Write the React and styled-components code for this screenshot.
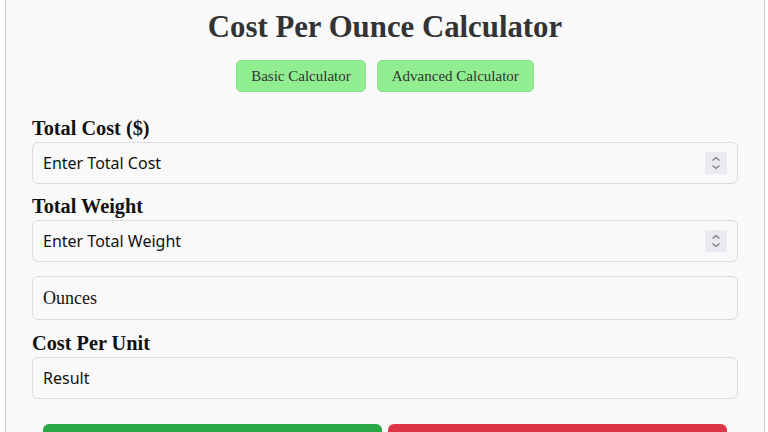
import React from 'react';
import styled, { createGlobalStyle } from 'styled-components';

const GlobalStyle = createGlobalStyle`
  html, body {
    margin: 0;
    padding: 0;
    background: #ffffff;
    font-family: "Liberation Serif", "Times New Roman", serif;
  }
`;

const Page = styled.div`
  padding: 0 3px 0 5px;
  height: 432px;
  overflow: hidden;
`;

const Card = styled.div`
  background-color: #f9f9f9;
  border: 1px solid #cccccc;
  border-top: none;
  padding: 6px 26px 20px 26px;
  min-height: 500px;
`;

const Title = styled.h1`
  margin: 0;
  text-align: center;
  color: #333333;
  font-size: 30.8px;
  line-height: 42px;
  font-weight: bold;
`;

const Tabs = styled.div`
  display: flex;
  justify-content: center;
  gap: 11px;
  margin-top: 12px;
  margin-bottom: 25px;
`;

const TabButton = styled.button`
  height: 32px;
  padding: 0 14px;
  background-color: #90ee90;
  color: #333333;
  border: 1px solid #8ee08e;
  border-radius: 5px;
  font-family: "Liberation Serif", "Times New Roman", serif;
  font-size: 15px;
`;

const Label = styled.label`
  display: block;
  font-size: 20.3px;
  line-height: 23px;
  font-weight: bold;
  color: #111111;
  margin-bottom: 2px;
`;

const Field = styled.div`
  position: relative;
  margin-top: ${(p) => p.$above || 0}px;
  margin-bottom: ${(p) => p.$below || 11}px;
`;

const Input = styled.input`
  box-sizing: border-box;
  display: block;
  width: 100%;
  height: 42px;
  padding: 0 10px;
  border: 1.5px solid #dcdcdc;
  border-radius: 6px;
  background: #f9f9f9;
  color: #111111;
  font-family: "Noto Sans", "Open Sans", sans-serif;
  font-size: 16px;
  outline: none;
  &::placeholder { color: #111111; }
`;

const Select = styled.select`
  box-sizing: border-box;
  display: block;
  width: 100%;
  height: 44px;
  padding: 0 10px;
  border: 1.5px solid #dcdcdc;
  border-radius: 6px;
  background: #f9f9f9;
  color: #111111;
  font-family: "Liberation Serif", "Times New Roman", serif;
  font-size: 18px;
  appearance: none;
  outline: none;
`;

const Spinner = styled.div`
  position: absolute;
  right: 11px;
  top: 10px;
  width: 22px;
  height: 22px;
  background: #e9e9ef;
  display: flex;
  align-items: center;
  justify-content: center;
`;

const Actions = styled.div`
  display: grid;
  grid-template-columns: 1fr 1fr;
  gap: 6px;
  padding: 0 11px;
  margin-top: 25px;
`;

const ActionButton = styled.button`
  height: 40px;
  border: none;
  border-radius: 6px;
  background-color: ${(p) => (p.$danger ? '#dc3545' : '#28a745')};
  color: #ffffff;
  font-family: "Liberation Serif", "Times New Roman", serif;
  font-size: 16px;
`;

const SpinIcon = () => (
  <svg width="12" height="16" viewBox="0 0 12 16">
    <path d="M2.5 5.5 L6 2.5 L9.5 5.5" fill="none" stroke="#7a7a80" strokeWidth="1.2" />
    <path d="M2.5 10.5 L6 13.5 L9.5 10.5" fill="none" stroke="#7a7a80" strokeWidth="1.2" />
  </svg>
);

const NumberField = ({ label, placeholder }) => (
  <>
    <Label>{label}</Label>
    <Field>
      <Input type="text" placeholder={placeholder} />
      <Spinner>
        <SpinIcon />
      </Spinner>
    </Field>
  </>
);

export default function App() {
  return (
    <Page>
      <GlobalStyle />
      <Card>
        <Title>Cost Per Ounce Calculator</Title>
        <Tabs>
          <TabButton>Basic Calculator</TabButton>
          <TabButton>Advanced Calculator</TabButton>
        </Tabs>
        <NumberField label="Total Cost ($)" placeholder="Enter Total Cost" />
        <NumberField label="Total Weight" placeholder="Enter Total Weight" />
        <Field $above={14} $below={12}>
          <Select defaultValue="oz">
            <option value="oz">Ounces</option>
            <option value="lb">Pounds</option>
            <option value="g">Grams</option>
          </Select>
        </Field>
        <Label>Cost Per Unit</Label>
        <Field>
          <Input type="text" placeholder="Result" readOnly />
        </Field>
        <Actions>
          <ActionButton>Calculate</ActionButton>
          <ActionButton $danger>Clear</ActionButton>
        </Actions>
      </Card>
    </Page>
  );
}
